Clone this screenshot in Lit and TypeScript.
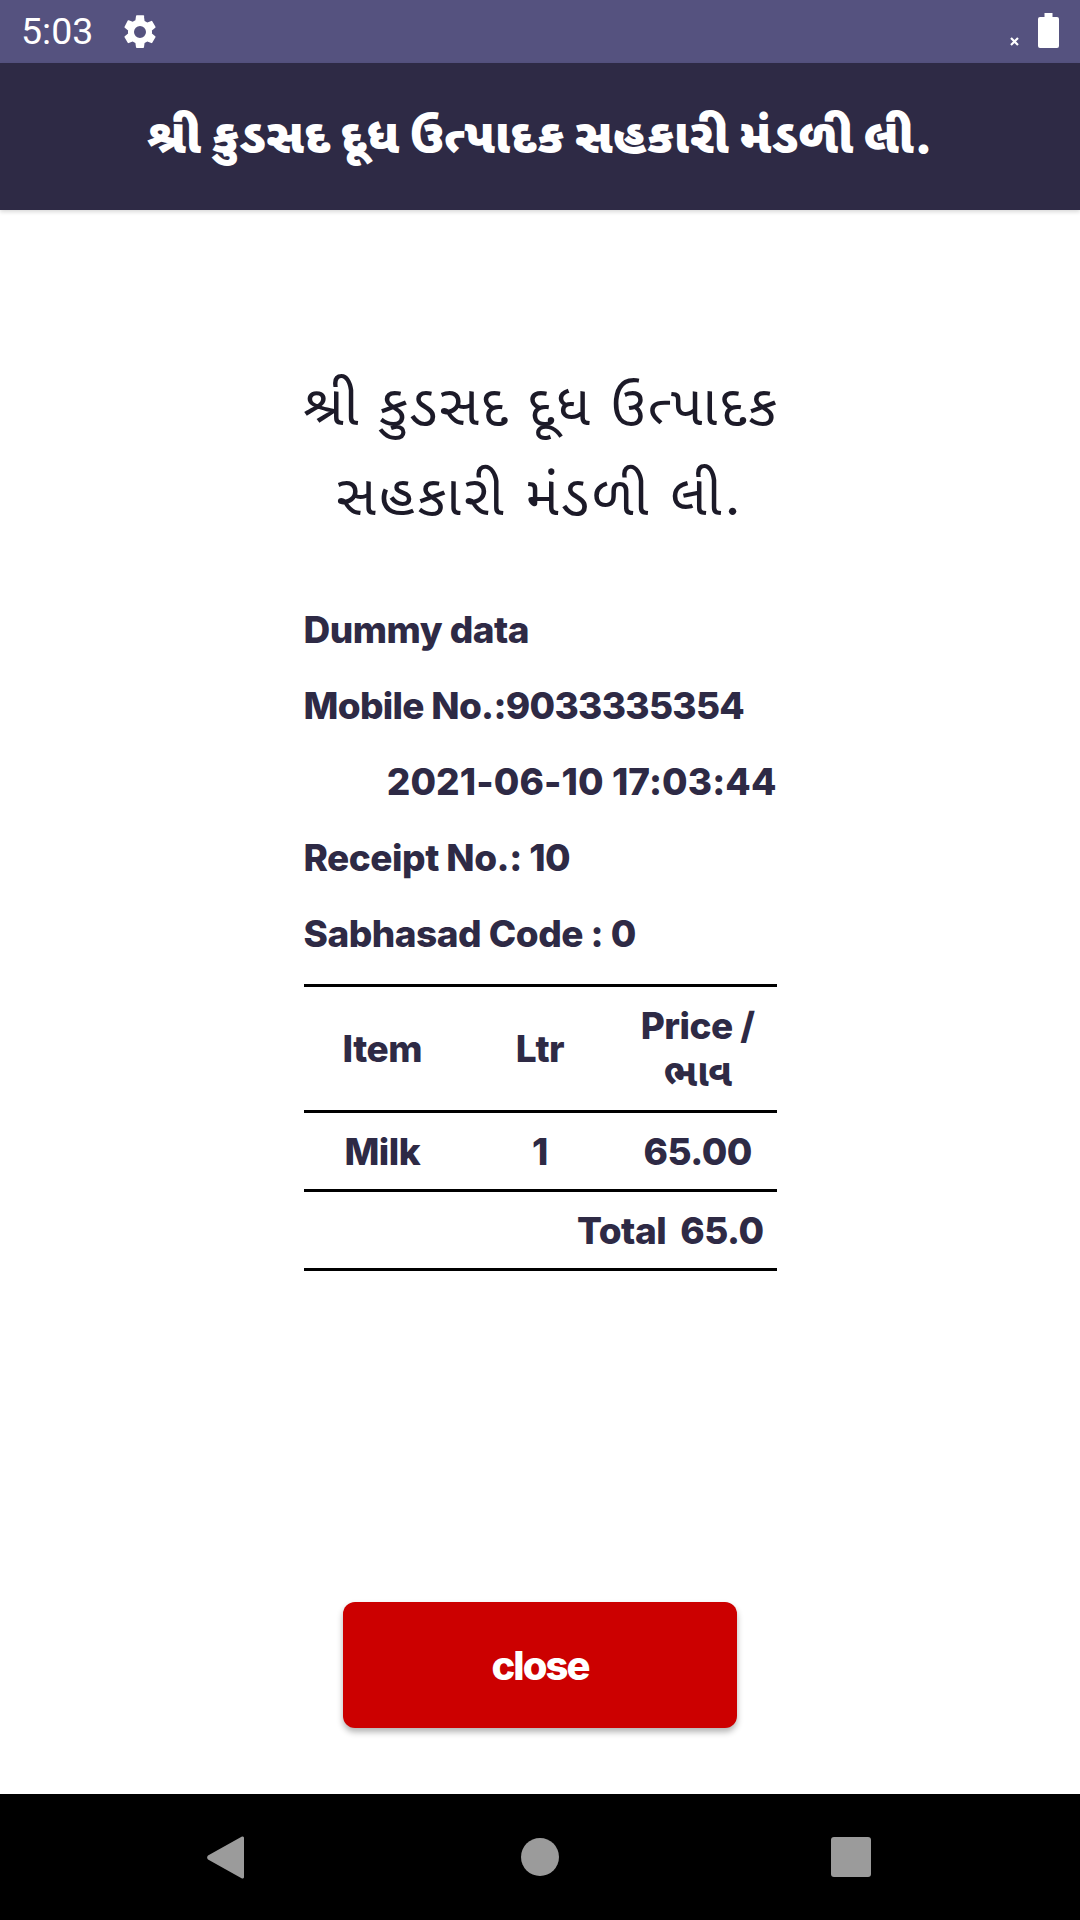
import { LitElement, html, css } from "lit";
import { customElement } from "lit/decorators.js";

@customElement("app-root")
export class AppRoot extends LitElement {
  static styles = css`
    :host { display: block; width: 1080px; height: 1920px; background: #fff; font-family: "Inter", "Noto Sans", "Noto Sans Gujarati", sans-serif; color: #2e2a45; }
    .page { height: 1920px; display: flex; flex-direction: column; }
    .status { height: 63px; background: #55527f; display: flex; align-items: center; padding: 0 21px 0 21px; color: #fff; box-sizing: border-box; }
    .time { font-family: "Roboto", sans-serif; font-size: 37.500px; font-weight: 400; line-height: 63px; }
    .gear { margin-left: 27px; }
    .spacer { flex: 1; }
    .x { margin-right: 19px; margin-top: 20px; }
    .batt { margin-top: -2px; }
    .header { height: 147px; padding-top: 6px; box-sizing: border-box; background: #2e2a45; color: #fff; display: flex; align-items: center; justify-content: center; font-size: 48px; letter-spacing: 0.5px; font-weight: 900; box-shadow: 0 2px 4px rgba(0,0,0,.15); }
    .main { flex: 1; display: flex; flex-direction: column; align-items: center; }
    .receipt { width: 473px; padding-top: 150px; }
    .title { font-size: 56px; line-height: 90px; text-align: center; color: #1c1a28; letter-spacing: 3px; font-weight: 400; margin-bottom: 52px; white-space: nowrap; }
    .title .tight { letter-spacing: 2.300px; }
    .row { font-size: 37px; font-weight: 800; line-height: 76px; height: 76px; letter-spacing: -0.5px; white-space: nowrap; }
    .row.mobile { letter-spacing: -0.7px; }
    .right { text-align: right; letter-spacing: 0.1px; }
    .table { border-top: 3px solid #000; margin-top: 12px; }
    .tr { display: grid; grid-template-columns: repeat(3, 1fr); align-items: center; text-align: center; border-bottom: 3px solid #000; font-size: 37px; font-weight: 800; letter-spacing: -0.5px; line-height: 46px; }
    .tr.head { height: 123px; }
    .tr.body { height: 75px; padding-top: 1px; }
    .tr.total { height: 75px; padding-top: 1px; display: flex; justify-content: flex-end; gap: 14px; padding-right: 13px; }
    .guj { display: block; font-size: 38px; }
    .actions { margin-top: auto; padding-bottom: 66px; }
    .close { width: 394px; height: 126px; background: #cc0000; color: #fff; border: none; border-radius: 12px; font: 800 40px "Inter", sans-serif; letter-spacing: -2px; box-shadow: 0 4px 6px rgba(0,0,0,.3); display: flex; align-items: center; justify-content: center; }
    .nav { height: 126px; background: #000; display: flex; align-items: center; padding-left: 207px; }
    .nav svg { display: block; }
    .nav .home { margin-left: 277px; }
    .nav .recent { margin-left: 272px; }
  `;

  render() {
    return html`<div class="page">
      <div class="status">
        <span class="time">5:03</span>
        <svg class="gear" width="40" height="40" viewBox="0 0 24 24" fill="#fff"><path d="M19.14 12.94c.04-.3.06-.61.06-.94s-.02-.64-.07-.94l2.03-1.58a.49.49 0 0 0 .12-.61l-1.92-3.32a.49.49 0 0 0-.59-.22l-2.39.96a7 7 0 0 0-1.62-.94l-.36-2.54A.48.48 0 0 0 13.92 2h-3.84c-.24 0-.44.17-.47.41l-.36 2.54c-.59.24-1.13.57-1.62.94l-2.39-.96a.48.48 0 0 0-.59.22L2.73 8.87a.48.48 0 0 0 .12.61l2.03 1.58c-.05.3-.08.63-.08.94s.02.64.07.94l-2.03 1.58a.49.49 0 0 0-.12.61l1.92 3.32c.12.22.37.29.59.22l2.39-.96c.5.38 1.03.7 1.62.94l.36 2.54c.05.24.24.41.48.41h3.84c.24 0 .44-.17.47-.41l.36-2.54c.59-.24 1.13-.56 1.62-.94l2.39.96c.22.08.47 0 .59-.22l1.92-3.32a.48.48 0 0 0-.12-.61zM12 15.6A3.6 3.6 0 1 1 12 8.4a3.6 3.6 0 0 1 0 7.2z"/></svg>
        <span class="spacer"></span>
        <svg class="x" width="9" height="9" viewBox="0 0 9 9"><path d="M1 1l7 7M8 1l-7 7" stroke="#fff" stroke-width="2.2"/></svg>
        <svg class="batt" width="21" height="35" viewBox="0 0 21 35" fill="#fff"><path d="M6.500 0h8v4h4.500a2 2 0 0 1 2 2v27a2 2 0 0 1-2 2h-17a2 2 0 0 1-2-2v-27a2 2 0 0 1 2-2h4.500z"/></svg>
      </div>
      <div class="header">શ્રી કુડસદ દૂધ ઉત્પાદક સહકારી મંડળી લી.</div>
      <div class="main">
        <div class="receipt">
          <div class="title"><span class="tight">શ્રી કુડસદ દૂધ ઉત્પાદક</span><br />સહકારી મંડળી લી.</div>
          <div class="row">Dummy data</div>
          <div class="row mobile">Mobile No.:9033335354</div>
          <div class="row right">2021-06-10 17:03:44</div>
          <div class="row">Receipt No.: 10</div>
          <div class="row">Sabhasad Code : 0</div>
          <div class="table">
            <div class="tr head"><span>Item</span><span>Ltr</span><span>Price /<span class="guj">ભાવ</span></span></div>
            <div class="tr body"><span>Milk</span><span>1</span><span>65.00</span></div>
            <div class="tr total"><span>Total</span><span>65.0</span></div>
          </div>
        </div>
        <div class="actions"><button class="close">close</button></div>
      </div>
      <div class="nav">
        <svg width="37" height="43" viewBox="0 0 37 43" fill="#9b9b9b"><path d="M35 .500a1.500 1.500 0 0 1 2 1.500v39a1.500 1.500 0 0 1-2 1.500L1 23.500a3 3 0 0 1 0-4z"/></svg>
        <svg class="home" width="38" height="38" viewBox="0 0 38 38"><circle cx="19" cy="19" r="19" fill="#9b9b9b"/></svg>
        <svg class="recent" width="40" height="40" viewBox="0 0 40 40"><rect width="40" height="40" rx="3" fill="#9b9b9b"/></svg>
      </div>
    </div>`;
  }
}
